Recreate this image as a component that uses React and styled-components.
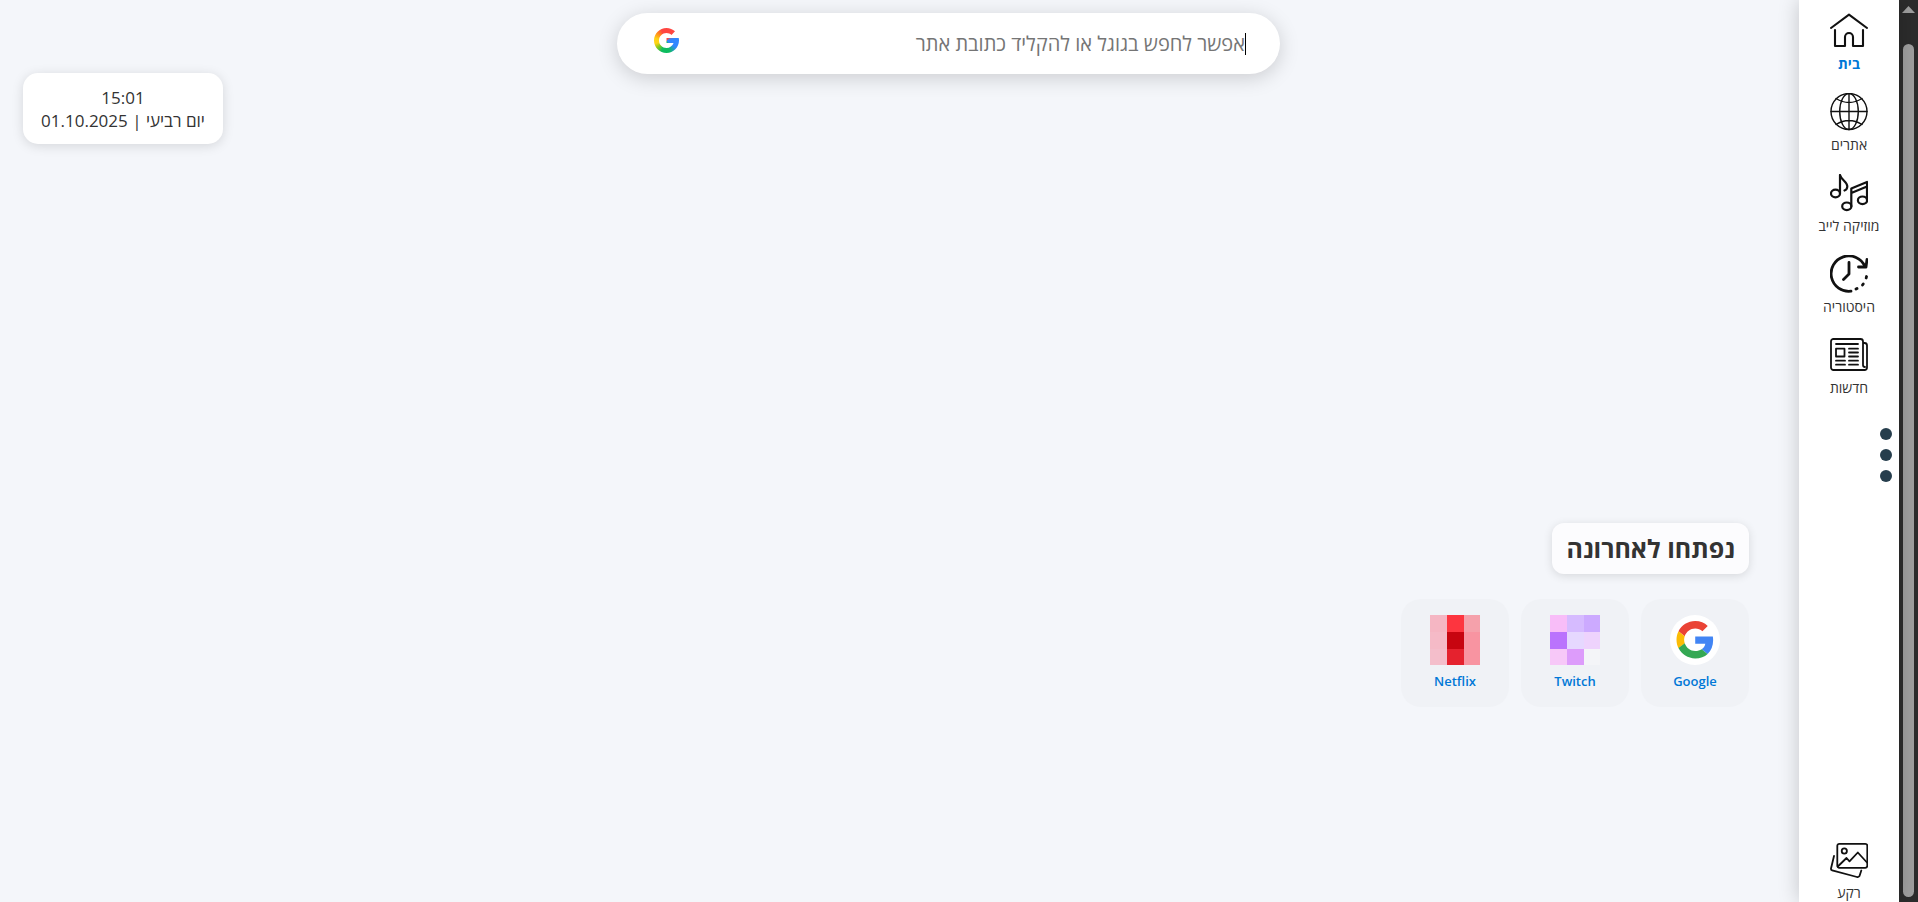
import React from 'react'
import styled, {createGlobalStyle} from 'styled-components'

const GlobalStyle = createGlobalStyle`
  * {
    box-sizing: border-box;
  }

  body {
    margin: 0;
    background: #f4f6fa;
    color: #333;
    font-family: 'Open Sans', 'Noto Sans', 'DejaVu Sans', sans-serif;
  }
`

const Page = styled.div`
  display: flex;
  min-height: 100vh;
`

/* scrollbar */

const ScrollTrack = styled.div`
  display: flex;
  flex-direction: column;
  align-items: center;
  width: 19px;
  padding: 6px 0 5px;
  background: #2c2c2c;
`

const ScrollArrow = styled.svg`
  width: 13px;
  height: 7px;
  margin-bottom: 31px;
  fill: #9f9f9f;
`

const ScrollThumb = styled.div`
  flex: 1;
  width: 11px;
  border-radius: 6px;
  background: #9f9f9f;
`

/* sidebar */

const Sidebar = styled.nav`
  display: flex;
  flex-direction: column;
  gap: 20px;
  width: 100px;
  padding-top: 12px;
  background: #fff;
  box-shadow: 0 0 20px rgba(0, 0, 0, 0.2);
`

const NavLink = styled.a`
  display: flex;
  flex-direction: column;
  align-items: center;
  gap: 5px;
  color: ${(props) => props.$active ? '#0078d7' : '#333'};
  font-size: 14px;
  font-weight: ${(props) => props.$active ? 700 : 400};
  line-height: 18px;
  text-decoration: none;
  ${(props) => props.$last ? 'margin-top: auto;' : ''}
`

const NavIcon = styled.svg`
  width: 38px;
  height: 38px;
  fill: none;
  stroke: #111;
  stroke-width: ${(props) => props.$weight};
  stroke-linecap: round;
  stroke-linejoin: round;
`

const Dots = styled.div`
  display: flex;
  flex-direction: column;
  gap: 9px;
  margin-top: 11px;
  padding-right: 7px;
`

const Dot = styled.button`
  width: 12px;
  height: 12px;
  padding: 0;
  border: 0;
  border-radius: 50%;
  background: #263e4d;
`

/* main */

const Main = styled.main`
  display: flex;
  flex: 1;
  flex-direction: column;
  padding: 13px 50px 195px 23px;
`

const SearchRow = styled.div`
  display: flex;
  align-items: flex-start;
  justify-content: center;
  height: 60px;
  padding-left: 125px;
`

const SearchBox = styled.form`
  display: flex;
  align-items: center;
  width: 42%;
  max-width: 663px;
  height: 61px;
  padding: 0 34px 0 37px;
  border-radius: 31px;
  background: #fff;
  box-shadow: 0 4px 20px rgba(0, 0, 0, 0.17);
`

const Caret = styled.span`
  width: 1px;
  height: 22px;
  background: #000;
`

const SearchInput = styled.input`
  flex: 1;
  min-width: 0;
  padding: 0;
  border: 0;
  outline: 0;
  background: transparent;
  font-family: inherit;
  font-size: 20px;
  line-height: 26px;

  &::placeholder {
    color: #757575;
    opacity: 1;
  }
`

const SearchLogo = styled.button`
  width: 25px;
  height: 25px;
  margin-bottom: 6px;
  padding: 0;
  border: 0;
  background: conic-gradient(#ff4641 0deg 40deg, #3186ff 75deg 125deg, #0ebc5f 165deg 205deg, #8ac71a 232deg, #ffd314 255deg 280deg, #ff8a1c 310deg, #ff4641 335deg);
  clip-path: path('M24.757 10.052H23.75V10H12.5v5h7.064c-1.031 2.911-3.8 5-7.064 5c-4.142 0-7.5-3.358-7.5-7.5c0-4.142 3.358-7.5 7.5-7.5c1.912 0 3.651.721 4.976 1.899l3.536-3.536C18.779 1.283 15.793 0 12.5 0C5.597 0 0 5.597 0 12.5c0 6.903 5.597 12.5 12.5 12.5c6.903 0 12.5-5.597 12.5-12.5C25 11.662 24.914 10.844 24.757 10.052z');
`

const Clock = styled.div`
  align-self: flex-end;
  min-width: 200px;
  padding: 13px 18px 12px;
  border-radius: 15px;
  background: #fff;
  box-shadow: 0 2px 12px rgba(0, 0, 0, 0.13);
  font-size: 17px;
  line-height: 23px;
  text-align: center;
  white-space: nowrap;
`

const Recent = styled.section`
  display: flex;
  flex-direction: column;
  align-items: flex-start;
  gap: 25px;
  margin-top: auto;
`

const RecentTitle = styled.h2`
  margin: 0;
  padding: 8px 14px;
  border-radius: 12px;
  background: #fcfcfe;
  box-shadow: 0 2px 10px rgba(0, 0, 0, 0.12);
  font-size: 25px;
  font-weight: 700;
  line-height: 35px;
`

const Cards = styled.div`
  display: flex;
  gap: 12px;
`

const Card = styled.a`
  display: flex;
  flex-direction: column;
  align-items: center;
  gap: 6px;
  width: 108px;
  height: 108px;
  padding-top: 16px;
  border-radius: 20px;
  background: #f0f2f6;
  color: #0078d7;
  font-size: 13px;
  font-weight: 600;
  line-height: 20px;
  text-decoration: none;
`

const CardIcon = styled.svg`
  width: 50px;
  height: 50px;
`

const netflix = [
  '#f5b6c3', '#fd353f', '#f5a1ab',
  '#f5bac7', '#c70510', '#f894a1',
  '#f4becb', '#e5222e', '#f894a1'
]

const twitch = [
  '#f8bdf8', '#d6bbff', '#ccaaff',
  '#ba73fd', '#e6d8ff', '#eed3fd',
  '#f7c8f8', '#dd9cfb', '#f4f5f8'
]

function PixelIcon({colors}) {
  return (
    <CardIcon viewBox="0 0 50 50" shapeRendering="crispEdges">
      {colors.map((color, idx) => (
        <rect
          key={idx}
          x={(idx % 3) * 17}
          y={Math.floor(idx / 3) * 17}
          width="17"
          height="17"
          fill={color}
        />
      ))}
    </CardIcon>
  )
}

function GoogleIcon() {
  return (
    <CardIcon viewBox="0 0 50 50">
      <circle cx="25" cy="25" r="25" fill="#fff" />
      <g transform="translate(6.5 6) scale(0.78)">
        <path fill="#ea4335" d="M24 9.5c3.54 0 6.71 1.22 9.21 3.6l6.85-6.85C35.9 2.38 30.47 0 24 0 14.62 0 6.51 5.38 2.56 13.22l7.98 6.19C12.43 13.72 17.74 9.5 24 9.5z" />
        <path fill="#4285f4" d="M46.98 24.55c0-1.57-.15-3.09-.38-4.55H24v9.02h12.94c-.58 2.96-2.26 5.48-4.78 7.18l7.73 6c4.51-4.18 7.09-10.36 7.09-17.65z" />
        <path fill="#fbbc05" d="M10.53 28.59c-.48-1.45-.76-2.99-.76-4.59s.27-3.14.76-4.59l-7.98-6.19C.92 16.46 0 20.12 0 24c0 3.88.92 7.54 2.56 10.78l7.97-6.19z" />
        <path fill="#34a853" d="M24 48c6.48 0 11.93-2.13 15.89-5.81l-7.73-6c-2.15 1.45-4.92 2.3-8.16 2.3-6.26 0-11.57-4.22-13.47-9.91l-7.98 6.19C6.51 42.62 14.62 48 24 48z" />
      </g>
    </CardIcon>
  )
}

const icons = {
  home: (
    <>
      <path d="M1 16L19 2.7L37 16" />
      <path d="M5 18V34H15V25a4 4 0 0 1 8 0V34H33V18" />
    </>
  ),
  sites: (
    <>
      <circle cx="19" cy="18.5" r="18" />
      <ellipse cx="19" cy="18.5" rx="9.3" ry="18" />
      <path d="M19 .5V36.5M1 18.5H37M6 5.5Q19 13.5 32 5.5M6 31.5Q19 23.5 32 31.5" />
    </>
  ),
  music: (
    <>
      <ellipse cx="5.5" cy="19.5" rx="4.5" ry="3.8" />
      <path d="M10 19.5V1C11 6 17.5 7.5 17.3 12.5C17.2 14.5 16 16 14.5 16.5" />
      <ellipse cx="16.8" cy="32.3" rx="4.6" ry="3.8" />
      <ellipse cx="32.5" cy="26.3" rx="4.6" ry="3.8" />
      <path d="M21.3 32.3V14.5L37 8V26.3M21.3 19L37 12.5" />
    </>
  ),
  history: (
    <>
      <path d="M21 36.2A17.7 17.7 0 1 1 35 11.5" />
      <path d="M37 4.5L36 12H28.5M19 7.5V19L13.5 24.5" />
      <path d="M36.5 21.5L36.2 23M33.2 29L32.5 30M27 33.5L26 34" />
    </>
  ),
  news: (
    <>
      <path d="M33 29V5.5a2.5 2.5 0 0 0-2.5-2.5H3.5A2.5 2.5 0 0 0 1 5.5V31.5A2.5 2.5 0 0 0 3.5 34H34.5a2.5 2.5 0 0 0 2.5-2.5V9.5a2.5 2.5 0 0 0-2.5-2.5H33M33 29q0 2 2 2" />
      <path d="M6 8H28M6 12.7H14.5V20.5H6zM19 12.7H28M19 16.5H28M19 20.5H28M19 24.7H28M19 28.7H28M6 24.7H15M6 28.7H15" />
    </>
  ),
  background: (
    <>
      <rect x="7.3" y="2.8" width="30" height="24" rx="2" />
      <circle cx="14.3" cy="10" r="2.6" />
      <path d="M7.8 25.5L16.5 17L19.5 20.3L27.8 11.5L37 21.5M4 15L1 27.5Q.8 29 2.2 29.4L27 36Q28.5 36.3 29.5 35L31.3 29.5" />
    </>
  )
}

const navItems = [
  {icon: 'home', label: 'בית', weight: 2.1, active: true},
  {icon: 'sites', label: 'אתרים', weight: 1.4},
  {icon: 'music', label: 'מוזיקה לייב', weight: 2.2},
  {icon: 'history', label: 'היסטוריה', weight: 2.8},
  {icon: 'news', label: 'חדשות', weight: 1.8}
]

function NavItem({icon, label, weight, active, last}) {
  return (
    <NavLink href={`#${icon}`} $active={active} $last={last}>
      <NavIcon viewBox="0 0 38 38" $weight={weight}>{icons[icon]}</NavIcon>
      {label}
    </NavLink>
  )
}

export default function App() {
  return (
    <Page dir="rtl">
      <GlobalStyle />
      <ScrollTrack>
        <ScrollArrow viewBox="0 0 13 7"><path d="M6.5 0L13 7H0z" /></ScrollArrow>
        <ScrollThumb />
      </ScrollTrack>
      <Sidebar>
        {navItems.map((item) => <NavItem key={item.icon} {...item} />)}
        <Dots>
          <Dot type="button" aria-label="1" />
          <Dot type="button" aria-label="2" />
          <Dot type="button" aria-label="3" />
        </Dots>
        <NavItem icon="background" label="רקע" weight={1.8} last />
      </Sidebar>
      <Main>
        <SearchRow>
          <SearchBox role="search">
            <Caret />
            <SearchInput
              type="text"
              aria-label="חיפוש"
              placeholder="אפשר לחפש בגוגל או להקליד כתובת אתר"
            />
            <SearchLogo type="submit" aria-label="Google" />
          </SearchBox>
        </SearchRow>
        <Clock>
          <div>15:01</div>
          <div>יום רביעי | 01.10.2025</div>
        </Clock>
        <Recent>
          <RecentTitle>נפתחו לאחרונה</RecentTitle>
          <Cards>
            <Card href="#google"><GoogleIcon />Google</Card>
            <Card href="#twitch"><PixelIcon colors={twitch} />Twitch</Card>
            <Card href="#netflix"><PixelIcon colors={netflix} />Netflix</Card>
          </Cards>
        </Recent>
      </Main>
    </Page>
  )
}
